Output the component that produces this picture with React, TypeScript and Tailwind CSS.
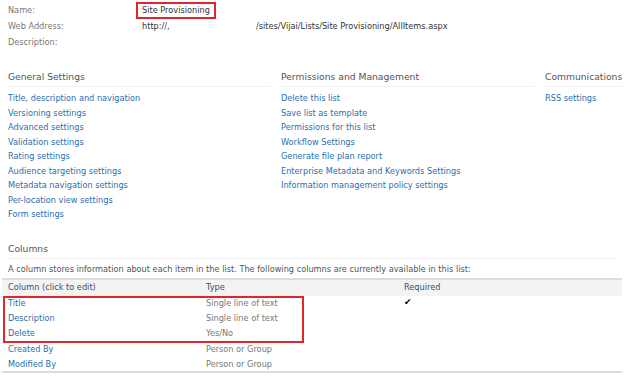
import React from 'react'

const font = { fontFamily: '"DejaVu Sans", Verdana, sans-serif' }

const general = [
  'Title, description and navigation',
  'Versioning settings',
  'Advanced settings',
  'Validation settings',
  'Rating settings',
  'Audience targeting settings',
  'Metadata navigation settings',
  'Per-location view settings',
  'Form settings',
]

const permissions = [
  'Delete this list',
  'Save list as template',
  'Permissions for this list',
  'Workflow Settings',
  'Generate file plan report',
  'Enterprise Metadata and Keywords Settings',
  'Information management policy settings',
]

const columns = [
  { name: 'Title', type: 'Single line of text', required: true },
  { name: 'Description', type: 'Single line of text', required: false },
  { name: 'Delete', type: 'Yes/No', required: false },
  { name: 'Created By', type: 'Person or Group', required: false },
  { name: 'Modified By', type: 'Person or Group', required: false },
]

function Section({ title, links, className = '' }: { title: string; links: string[]; className?: string }) {
  return (
    <div className={className}>
      <div className="text-[9.2px] leading-[12px] text-[#555] pb-[3px] border-b border-[#f0f0f0] mr-[10px] whitespace-nowrap">{title}</div>
      <div className="pt-[4px]">
        {links.map((l) => (
          <div key={l} className="h-[14.5px] leading-[14.5px] text-[#2a6fb0] whitespace-nowrap">{l}</div>
        ))}
      </div>
    </div>
  )
}

export default function App() {
  return (
    <div className="w-[624px] h-[376px] bg-white overflow-hidden text-[8.2px]" style={font}>
      <div className="pl-[8px] pt-[2px]">
        <div className="flex h-[16px] items-center">
          <div className="w-[128px] text-[#777]">Name:</div>
          <div className="border-2 border-[#e0262b] px-[4px] h-[17px] flex items-center text-[#333]">Site Provisioning</div>
        </div>
        <div className="flex h-[16px] items-center">
          <div className="w-[134px] text-[#777]">Web Address:</div>
          <div className="text-[#333] flex">
            <span className="w-[114px]">http://,</span>
            <span>/sites/Vijai/Lists/Site Provisioning/AllItems.aspx</span>
          </div>
        </div>
        <div className="flex h-[16px] items-center">
          <div className="text-[#777]">Description:</div>
        </div>
      </div>

      <div className="flex pl-[8px] pt-[21px]">
        <Section title="General Settings" links={general} className="w-[273px] shrink-0" />
        <Section title="Permissions and Management" links={permissions} className="w-[264px] shrink-0" />
        <Section title="Communications" links={['RSS settings']} className="flex-1" />
      </div>

      <div className="pt-[21px]">
        <div className="mx-[8px] text-[9.2px] leading-[12px] text-[#555] pb-[3px] border-b border-[#f0f0f0]">Columns</div>
        <div className="px-[8px] pt-[4px] h-[19px] text-[#555] whitespace-nowrap">
          A column stores information about each item in the list. The following columns are currently available in this list:
        </div>
        <div className="relative mx-[2px]">
          <div className="flex h-[18px] items-center bg-[#f3f3f3] border-t-2 border-[#dcdcdc] text-[#3b4f6b] px-[6px]">
            <div className="w-[198px]">Column (click to edit)</div>
            <div className="w-[198px]">Type</div>
            <div>Required</div>
          </div>
          {columns.map((c) => (
            <div key={c.name} className="flex h-[15.2px] items-center px-[6px]">
              <div className="w-[198px] text-[#2a6fb0]">{c.name}</div>
              <div className="w-[198px] text-[#777]">{c.type}</div>
              <div className="text-black text-[9px]">{c.required ? '✔' : ''}</div>
            </div>
          ))}
          <div className="border-b-2 border-[#dcdcdc] h-[2px]" />
          <div className="absolute left-[1px] top-[18px] w-[301px] h-[47px] border-2 border-[#e0262b]" />
        </div>
      </div>
    </div>
  )
}
